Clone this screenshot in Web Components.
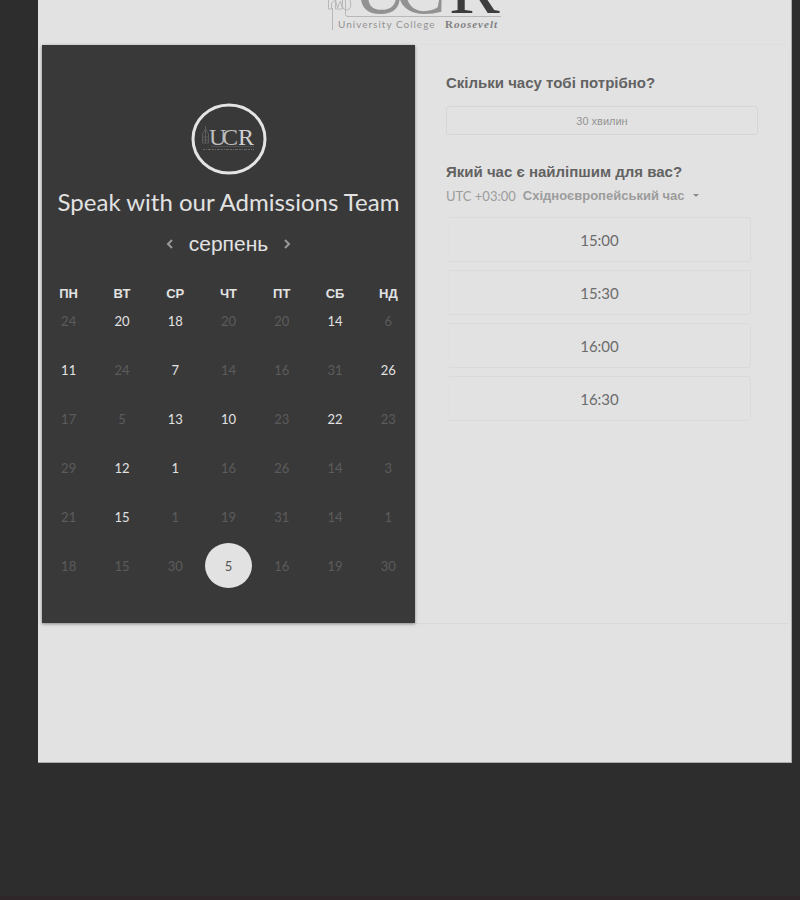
<!DOCTYPE html>
<html lang="uk">
<head>
<meta charset="utf-8">
<meta name="viewport" content="width=device-width, initial-scale=1">
<title>Speak with our Admissions Team</title>
<style>
html { background: #2d2d2d; }
body { margin: 0; min-height: 100vh; box-sizing: border-box; border-bottom: 4px solid #2f2629; font-family: Lato, "Liberation Sans", sans-serif; }
</style>
</head>
<body>
<booking-page>
  <ucr-logo slot="header"></ucr-logo>
  <booking-calendar slot="calendar" month="серпень">Speak with our Admissions Team</booking-calendar>
  <booking-times slot="times">
    <time-slot>15:00</time-slot>
    <time-slot>15:30</time-slot>
    <time-slot>16:00</time-slot>
    <time-slot>16:30</time-slot>
  </booking-times>
</booking-page>

<script>
class ShadowElement extends HTMLElement {
  connectedCallback() {
    if (this.shadowRoot) return;
    const template = document.createElement('template');
    template.innerHTML = this.render();
    this.attachShadow({ mode: 'open' }).append(template.content.cloneNode(true));
  }
}

customElements.define('booking-page', class extends ShadowElement {
  render() {
    return `<style>
      :host { display: block; margin: 0 8px 0 38px; padding: 0 4px 140px; background: #e2e2e2; box-shadow: inset -1px -1px #aaa; }
      header { display: flex; justify-content: center; height: 45px; overflow: hidden; }
      main { display: grid; grid-template-columns: 1fr 1fr; box-shadow: 0 1px 1px #d9d9d9, 0 -1px 1px #dedede; }
    </style>
    <header><slot name="header"></slot></header>
    <main><slot name="calendar"></slot><slot name="times"></slot></main>`;
  }
});

customElements.define('ucr-logo', class extends ShadowElement {
  render() {
    return `<style>
      :host { display: block; }
      svg { display: block; }
      .big { font: 76px "Liberation Serif", serif; }
    </style>
    <svg width="180" height="45" viewBox="0 0 180 45" role="img" aria-label="University College Roosevelt">
      <g fill="none" stroke="#b8b8b8">
        <path d="M7.500 30V8M3.500 0V9H6.500V3L10.500 0 12.500 8 15.500 1 17.500 9V0M20.500 0V14.500Q20.500 16.500 23 16.500H176"/>
        <path d="M17.500 0V7Q20 12 24 9Q27 7 25 0M10.500 0V9H17"/>
      </g>
      <g class="big">
        <text x="28" y="13" fill="#929292">U</text>
        <text x="70" y="13" fill="#929292">C</text>
        <text x="124" y="13" fill="#3d3d3d">R</text>
      </g>
      <text x="13" y="28" fill="#929292" font-family="Lato, sans-serif" font-size="10" letter-spacing="1">University College</text>
      <text x="120" y="28" fill="#808080" font-family="Liberation Serif, serif" font-size="11" font-weight="700" letter-spacing="1">R<tspan font-style="italic">oosevelt</tspan></text>
    </svg>`;
  }
});

customElements.define('ucr-badge', class extends ShadowElement {
  render() {
    return `<style>:host, svg { display: block; }</style>
    <svg width="76" height="72" viewBox="0 0 76 72" role="img" aria-label="UCR">
      <ellipse cx="38" cy="36" rx="36" ry="34" fill="none" stroke="#e4e4e4" stroke-width="3"/>
      <path d="M11.500 40V31L14.500 26 17.500 31V40ZM14.500 23V40M12 34H17M12 37H17" fill="none" stroke="#5c5c5c"/>
      <g font-family="Liberation Serif, serif" font-size="24" fill="#bcbcbc">
        <text x="18" y="42">U</text><text x="31" y="42">C</text><text x="47" y="42" fill="#d0d0d0">R</text>
      </g>
      <path d="M20 43.500H63" stroke="#505050"/>
      <path d="M12 46.500H63" stroke="#686868" stroke-dasharray="2 1 1 1 3 1"/>
    </svg>`;
  }
});

customElements.define('booking-calendar', class extends ShadowElement {
  render() {
    const days = ['ПН', 'ВТ', 'СР', 'ЧТ', 'ПТ', 'СБ', 'НД'];
    // "+" marks a day that can be booked, "*" the chosen day.
    const weeks = [
      '24 +20 +18 20 20 +14 6',
      '+11 24 +7 14 16 31 +26',
      '17 5 +13 +10 23 +22 23',
      '29 +12 +1 16 26 14 3',
      '21 +15 1 19 31 14 1',
      '18 15 30 *5 16 19 30'
    ];
    const cell = d => {
      const n = d.replace(/\D/, '');
      if (d[0] === '*') return `<td><button type="button" class="chosen" aria-pressed="true">${n}</button></td>`;
      return `<td><button type="button"${d[0] === '+' ? '' : ' disabled'}>${n}</button></td>`;
    };
    return `<style>
      :host { display: flex; flex-direction: column; align-items: center; padding: 58px 0 33px; background: #393939; color: #e2e2e2; box-shadow: 0 1px 3px #888; }
      h1 { margin: 11px 0 0; font-size: 24px; line-height: 32px; font-weight: 400; white-space: nowrap; }
      .month { display: flex; align-items: center; gap: 12px; margin-top: 10px; }
      h2 { margin: 0; font: 21px/32px "Liberation Sans", sans-serif; }
      button { border: 0; padding: 0; background: none; color: inherit; font: inherit; }
      .arrow { display: grid; place-items: center; width: 14px; height: 24px; color: #999; }
      table { width: 100%; margin-top: 25px; border-collapse: collapse; table-layout: fixed; }
      th { height: 18px; padding: 0; font: bold 13px/18px "Liberation Sans", sans-serif; }
      td { height: 49px; padding: 0; }
      td button { display: block; width: 47px; height: 45px; margin: auto; border-radius: 50%; font-size: 13px; line-height: 20px; }
      tr:first-child td { height: 42px; vertical-align: top; }
      tr:first-child button { height: 35px; }
      td button:disabled { color: #5c5c5c; }
      td .chosen { background: #e2e2e2; color: #555; }
    </style>
    <ucr-badge></ucr-badge>
    <h1><slot></slot></h1>
    <div class="month">
      <button type="button" class="arrow" aria-label="Попередній місяць"><svg width="8" height="10" viewBox="0 0 8 10" fill="none" stroke="currentColor" stroke-width="2"><path d="M6 1 2 5 6 9"/></svg></button>
      <h2>${this.getAttribute('month')}</h2>
      <button type="button" class="arrow" aria-label="Наступний місяць"><svg width="8" height="10" viewBox="0 0 8 10" fill="none" stroke="currentColor" stroke-width="2"><path d="M2 1 6 5 2 9"/></svg></button>
    </div>
    <table>
      <thead><tr>${days.map(d => `<th scope="col">${d}</th>`).join('')}</tr></thead>
      <tbody>${weeks.map(w => `<tr>${w.split(' ').map(cell).join('')}</tr>`).join('')}</tbody>
    </table>`;
  }
});

customElements.define('time-slot', class extends ShadowElement {
  render() {
    return `<style>
      :host { display: block; }
      button { display: block; width: 100%; height: 45px; padding: 0; border: 1px solid #dadada; border-left-color: #e0e0e0; border-radius: 3px; background: none; color: #6c6c6c; font: 15px/20px Lato, sans-serif; }
    </style><button type="button"><slot></slot></button>`;
  }
});

customElements.define('booking-times', class extends ShadowElement {
  render() {
    return `<style>
      :host { display: block; padding: 28px 30px 0 31px; color: #626262; }
      h2 { margin: 0; font: bold 15px/20px "Liberation Sans", sans-serif; }
      .duration { display: block; width: 100%; height: 29px; margin: 13px 0 27px; padding: 0; border: 1px solid #d6d6d6; border-radius: 3px; background: none; color: #949494; font: 11px/16px "Liberation Sans", sans-serif; }
      .zone { display: flex; align-items: center; gap: 7px; margin-top: 4px; height: 20px; color: #9c9c9c; white-space: nowrap; }
      label { font-size: 13px; line-height: 20px; }
      select { field-sizing: content; appearance: none; border: 0; margin: 0; padding: 0; background: none; color: inherit; font: bold 13px/20px "Liberation Sans", sans-serif; }
      .list { display: flex; flex-direction: column; gap: 8px; margin: 11px 7px 0 2px; }
    </style>
    <h2>Скільки часу тобі потрібно?</h2>
    <button type="button" class="duration">30 хвилин</button>
    <h2>Який час є найліпшим для вас?</h2>
    <div class="zone">
      <label for="zone">UTC +03:00</label>
      <select id="zone"><option>Східноєвропейський час</option></select>
      <svg width="8" height="6" viewBox="0 0 8 6" fill="#8c8c8c" aria-hidden="true"><path d="M1 1H7L4 4Z"/></svg>
    </div>
    <div class="list"><slot></slot></div>`;
  }
});
</script>
</body>
</html>
